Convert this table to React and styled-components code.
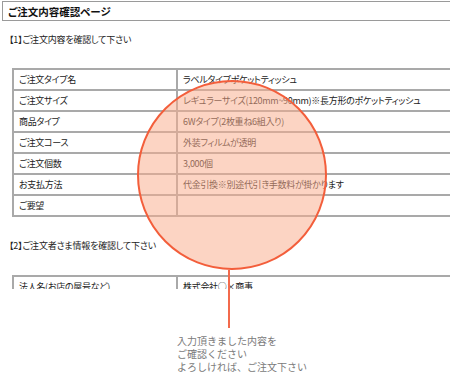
import React from 'react'
import styled, { createGlobalStyle } from 'styled-components'

const GlobalStyle = createGlobalStyle`
    html, body {
        margin: 0;
        padding: 0;
        background: #fff;
        overflow: hidden;
    }
    body {
        font-family: "Noto Sans CJK JP", "Noto Sans", sans-serif;
        color: #222;
    }
`;

const Page = styled.div`
    position: relative;
    width: 450px;
    height: 385px;
    overflow: hidden;
    padding-top: 1px;
    box-sizing: border-box;
`;

const TitleBox = styled.div`
    margin-left: 2px;
    width: 470px;
    height: 18px;
    border: 1px solid #9a9a9a;
    display: flex;
    align-items: center;
    padding-left: 5px;
    font-size: 10.5px;
    font-weight: bold;
    font-feature-settings: "palt";
    color: #111;
`;

const SectionHeading = styled.p`
    margin: ${p => p.$top}px 0 0 9px;
    font-size: 9px;
    line-height: 14px;
    letter-spacing: -0.2px;
    font-feature-settings: "palt";
    color: #222;
`;

const Clip = styled.div`
    margin-top: ${p => p.$top}px;
    height: ${p => p.$height ? `${p.$height}px` : 'auto'};
    overflow: hidden;
`;

const Table = styled.table`
    margin-left: 12px;
    width: 470px;
    border-collapse: collapse;
    font-size: 9px;
    letter-spacing: -0.3px;
    font-feature-settings: "palt";
    td {
        border: 2px solid #a9a9a9;
        height: 21px;
        padding: 0 0 0 5px;
        box-sizing: border-box;
        line-height: 12px;
        white-space: nowrap;
    }
    td:first-child {
        width: 164px;
    }
`;

const Callout = styled.div`
    position: absolute;
    left: 137px;
    top: 80px;
    display: flex;
    flex-direction: column;
    align-items: flex-start;
    pointer-events: none;
`;

const Circle = styled.div`
    width: 190px;
    height: 190px;
    border-radius: 50%;
    border: 2px solid #f35e3b;
    box-sizing: border-box;
    background: rgba(250, 172, 140, 0.52);
`;

const Stem = styled.div`
    width: 2px;
    height: 58px;
    margin-left: 91px;
    background: #f36a4c;
`;

const Note = styled.div`
    margin: 6px 0 0 40px;
    font-size: 10px;
    line-height: 13px;
    color: #7a7a7a;
    white-space: nowrap;
`;

const orderRows = [
    ['ご注文タイプ名', 'ラベルタイプポケットティッシュ'],
    ['ご注文サイズ', 'レギュラーサイズ(120mm~90mm)※長方形のポケットティッシュ'],
    ['商品タイプ', '6Wタイプ(2枚重ね6組入り)'],
    ['ご注文コース', '外装フィルムが透明'],
    ['ご注文個数', '3,000個'],
    ['お支払方法', '代金引換※別途代引き手数料が掛かります'],
    ['ご要望', ''],
];

export default function App() {
    return (
        <>
            <GlobalStyle />
            <Page>
                <TitleBox>ご注文内容確認ページ</TitleBox>

                <SectionHeading $top={12}>【1】ご注文内容を確認して下さい</SectionHeading>
                <Clip $top={21}>
                    <Table>
                        <tbody>
                            {orderRows.map(([label, value]) => (
                                <tr key={label}>
                                    <td>{label}</td>
                                    <td>{value}</td>
                                </tr>
                            ))}
                        </tbody>
                    </Table>
                </Clip>

                <SectionHeading $top={22}>【2】ご注文者さま情報を確認して下さい</SectionHeading>
                <Clip $top={22} $height={14}>
                    <Table>
                        <tbody>
                            <tr>
                                <td>法人名(お店の屋号など)</td>
                                <td>株式会社○×商事</td>
                            </tr>
                        </tbody>
                    </Table>
                </Clip>

                <Callout>
                    <Circle />
                    <Stem />
                    <Note>
                        入力頂きました内容を<br />
                        ご確認ください<br />
                        よろしければ、ご注文下さい
                    </Note>
                </Callout>
            </Page>
        </>
    )
}
